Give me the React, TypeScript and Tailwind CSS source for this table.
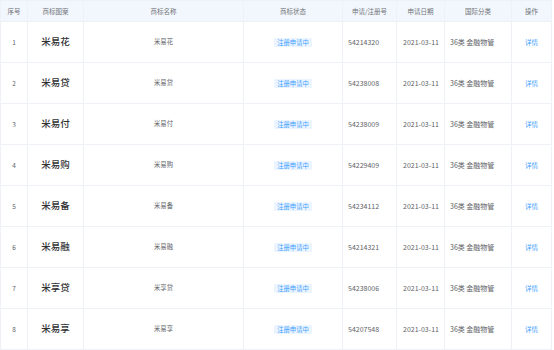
import React from "react";

const rows = [
  ["1", "米易花", "54214320"],
  ["2", "米易贷", "54238008"],
  ["3", "米易付", "54238009"],
  ["4", "米易购", "54229409"],
  ["5", "米易备", "54234112"],
  ["6", "米易融", "54214321"],
  ["7", "米享贷", "54238006"],
  ["8", "米易享", "54207548"],
];

const widths = [27, 56, 160, 99, 54, 48, 67, 40];
const heads = ["序号", "商标图案", "商标名称", "商标状态", "申请/注册号", "申请日期", "国际分类", "操作"];

export default function App() {
  return (
    <div
      className="w-[554px] h-[350px] bg-white overflow-hidden"
      style={{ fontFamily: '"Noto Sans CJK SC", "Noto Sans", sans-serif' }}
    >
      <table className="border-collapse table-fixed w-[551px] text-[#606266] leading-none">
        <colgroup>
          {widths.map((w, i) => (
            <col key={i} style={{ width: w }} />
          ))}
        </colgroup>
        <thead>
          <tr className="h-[21px] bg-[#f2f7fd]">
            {heads.map((h, i) => (
              <th
                key={i}
                className="font-normal text-[6.5px] text-[#707378] text-center align-middle border border-[#eef1f6] p-0"
              >
                {h}
              </th>
            ))}
          </tr>
        </thead>
        <tbody>
          {rows.map(([n, name, no]) => (
            <tr key={n} className="h-[41px]">
              <td className="border border-[#eef1f6] text-center align-middle text-[6.5px] p-0">{n}</td>
              <td className="border border-[#eef1f6] text-center align-middle text-[9.5px] font-medium text-[#303133] p-0">{name}</td>
              <td className="border border-[#eef1f6] text-center align-middle text-[6.3px] p-0">{name}</td>
              <td className="border border-[#eef1f6] align-middle p-0">
                <div className="flex justify-center">
                  <span className="block bg-[#ecf5ff] text-[#409eff] text-[6.3px] leading-[9px] px-[3px] rounded-[1px]">
                    注册申请中
                  </span>
                </div>
              </td>
              <td className="border border-[#eef1f6] text-left align-middle pl-[5px] text-[7px] p-0">{no}</td>
              <td className="border border-[#eef1f6] text-left align-middle pl-[6px] text-[7px] p-0">2021-03-11</td>
              <td className="border border-[#eef1f6] text-left align-middle pl-[5px] text-[7px] p-0">36类 金融物管</td>
              <td className="border border-[#eef1f6] text-center align-middle text-[6.5px] text-[#409eff] p-0">详情</td>
            </tr>
          ))}
        </tbody>
      </table>
    </div>
  );
}
